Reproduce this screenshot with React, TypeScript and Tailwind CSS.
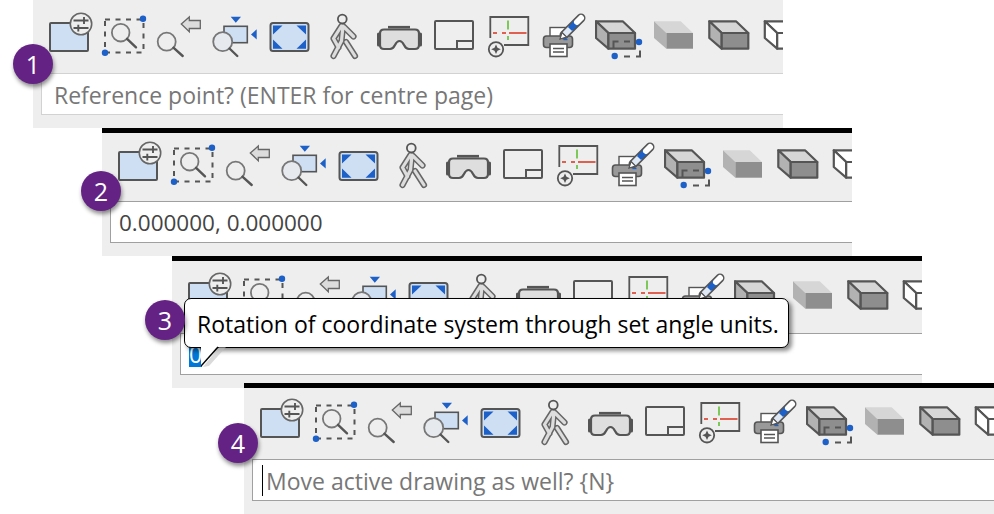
import React from "react";

const S = "#555555";
const BLUE = "#1c60c8";
const LIGHT = "#cfdff3";

function Ico({ x, w, children }: { x: number; w: number; children: React.ReactNode }) {
  return (
    <svg width={w} height={48} viewBox={`${x} 12 ${w} 48`} className="shrink-0 block">
      {children}
    </svg>
  );
}

function Mag({ cx, cy, r, ex, ey }: { cx: number; cy: number; r: number; ex: number; ey: number }) {
  const a = Math.atan2(ey - cy, ex - cx);
  return (
    <g fill="none" strokeLinecap="round">
      <circle cx={cx} cy={cy} r={r} stroke="#777" strokeWidth={1.8} />
      <line x1={cx + r * Math.cos(a)} y1={cy + r * Math.sin(a)} x2={ex} y2={ey} stroke={S} strokeWidth={2.4} />
    </g>
  );
}

function Box({ dx, top, side, front, stroke }: { dx: number; top: string; side: string; front: string; stroke: string }) {
  return (
    <g transform={`translate(${dx} 0)`} stroke={stroke} strokeWidth={stroke === "none" ? 0 : 2.2} strokeLinejoin="round">
      <polygon points="709.3,21.3 736,21.3 748.3,33 721.7,33" fill={top} />
      <polygon points="709.3,21.3 721.7,33 721.7,48.7 709.3,38" fill={side} />
      <rect x={721.7} y={33} width={26.6} height={15.7} fill={front} />
    </g>
  );
}

function Toolbar() {
  const walk = "M341.500 26L333.500 38.500L338.500 47.500M343 26L341.500 41L333.500 56M344 27L353.500 36.500M346 42L355 56";
  return (
    <div className="flex h-12 pl-3">
      <Ico x={45} w={55}>
        <rect x={50} y={23} width={38} height={28} fill={LIGHT} stroke={S} strokeWidth={2} rx={1} />
        <circle cx={81} cy={24} r={10.700} fill="#eeeeee" stroke="#666666" strokeWidth={1.6} />
        <path d="M73.500 20.500h15M73.500 28h15M84 17v7M78.300 24.800v6.700" stroke={S} strokeWidth={1.9} fill="none" />
      </Ico>
      <Ico x={100} w={55}>
        <rect x={105} y={19.500} width={38.500} height={33} fill="none" stroke={S} strokeWidth={2} strokeDasharray="5 5.500" />
        <Mag cx={120.700} cy={32.700} r={8.800} ex={136} ey={47.300} />
        <circle cx={143} cy={18.700} r={3.200} fill={BLUE} />
        <circle cx={105} cy={52.700} r={3.200} fill={BLUE} />
      </Ico>
      <Ico x={155} w={54}>
        <Mag cx={166.700} cy={41.700} r={9} ex={182.700} ey={56} />
        <polygon points="181.300,24 189.300,17 189.300,20.500 200.300,20.500 200.300,28.500 189.300,28.500 189.300,31.700" fill="#dcdcdc" stroke="#666" strokeWidth={1.3} />
      </Ico>
      <Ico x={209} w={56}>
        <rect x={224} y={26.300} width={23.300} height={16.400} fill={LIGHT} stroke={S} strokeWidth={1.600} />
        <polygon points="230.700,16.700 241,16.700 235.800,22.700" fill={BLUE} />
        <polygon points="256.700,29.300 256.700,39.500 251,34.400" fill={BLUE} />
        <circle cx={222.700} cy={41.700} r={9.500} fill="#e6e9ee" stroke="#777" strokeWidth={1.800} />
        <line x1={229.500} y1={48.500} x2={237.300} y2={56} stroke={S} strokeWidth={2.400} strokeLinecap="round" />
      </Ico>
      <Ico x={265} w={60}>
        <rect x={270.500} y={23} width={38} height={28} rx={2.500} fill={LIGHT} stroke={S} strokeWidth={2} />
        <polygon points="273,25.500 282.500,25.500 273,34.500" fill={BLUE} />
        <polygon points="306,25.500 296.500,25.500 306,34.500" fill={BLUE} />
        <polygon points="273,48.800 282.500,48.800 273,39.500" fill={BLUE} />
        <polygon points="306,48.800 296.500,48.800 306,39.500" fill={BLUE} />
      </Ico>
      <Ico x={325} w={48}>
        <g fill="none" strokeLinecap="round" strokeLinejoin="round">
          <path d={walk} stroke="#666666" strokeWidth={6.200} />
          <path d={walk} stroke="#dddddd" strokeWidth={3.200} />
        </g>
        <circle cx={342.300} cy={19} r={4.400} fill="#eeeeee" stroke={S} strokeWidth={1.800} />
      </Ico>
      <Ico x={373} w={57}>
        <path d="M388 27.200h22" stroke={S} strokeWidth={2.600} />
        <path d="M378.500 34v11M420.500 34v11" stroke={S} strokeWidth={3} strokeLinecap="round" />
        <path d="M384 29.500h31q4 0 4 4v11.500q0 4-4 4h-6q-3 0-5-4q-2-4-4.500-4q-2.500 0-4.500 4q-2 4-5 4h-6q-4 0-4-4v-11.500q0-4 4-4z" fill="#dedede" stroke={S} strokeWidth={2.200} />
      </Ico>
      <Ico x={430} w={55}>
        <rect x={435} y={21} width={38} height={28} rx={1} fill="none" stroke={S} strokeWidth={2} />
        <path d="M457 49v-8h16" fill="none" stroke={S} strokeWidth={2} />
      </Ico>
      <Ico x={485} w={55}>
        <path d="M490.300 38V17h38v28H504" fill="none" stroke={S} strokeWidth={1.800} />
        <path d="M493 33h4M502 33h4M509 33h17.500" stroke="#e0604f" strokeWidth={2} />
        <path d="M508 20.500v9M508 36v4" stroke="#7ec85a" strokeWidth={2} />
        <circle cx={496} cy={49.300} r={7.200} fill="#eeeeee" stroke={S} strokeWidth={1.800} />
        <path d="M496 44.500l1.500 3.300 3.300 1.500-3.300 1.500-1.500 3.300-1.500-3.300-3.300-1.500 3.300-1.500z" fill={S} />
      </Ico>
      <Ico x={540} w={55}>
        <rect x={550} y={27.500} width={17} height={10} fill="#ffffff" stroke={S} strokeWidth={1.400} />
        <rect x={543.500} y={36} width={29} height={11.500} rx={3} fill="#999999" stroke={S} strokeWidth={1.600} />
        <rect x={550} y={44} width={17} height={12.500} fill="#ffffff" stroke={S} strokeWidth={1.600} />
        <path d="M553 48.500h11M553 52h11" stroke={S} strokeWidth={1.400} />
        <path d="M564 35L581 18" stroke={S} strokeWidth={9} strokeLinecap="round" />
        <path d="M564.500 34.500L571 28" stroke="#dfe8f5" strokeWidth={6} />
        <path d="M570 29L577 22" stroke={BLUE} strokeWidth={6} />
        <path d="M577 22L581 18" stroke="#ffffff" strokeWidth={6} strokeLinecap="round" />
        <polygon points="560,39 562,32.500 566.500,37" fill="#ffffff" stroke={S} strokeWidth={1.200} />
        <path d="M563.500 39.500h4" stroke={BLUE} strokeWidth={1.400} />
      </Ico>
      <Ico x={595} w={55}>
        <Box dx={-113.300} top="#d6d6d6" side="#b2b2b2" front="#8e8e8e" stroke={S} />
        <path d="M613.500 48v-6.500h5M624 41.500h6M624 56.500h6M640 50.500V56.500h-4" fill="none" stroke={S} strokeWidth={2} />
        <circle cx={639} cy={42} r={3.200} fill={BLUE} />
        <circle cx={614.700} cy={56} r={3.200} fill={BLUE} />
      </Ico>
      <Ico x={650} w={55}>
        <Box dx={-55.300} top="#d6d6d6" side="#b2b2b2" front="#8e8e8e" stroke="none" />
      </Ico>
      <Ico x={705} w={55}>
        <Box dx={0} top="#d6d6d6" side="#b2b2b2" front="#8e8e8e" stroke={S} />
      </Ico>
      <Ico x={760} w={23}>
        <Box dx={55.500} top="#ffffff" side="#ffffff" front="#ffffff" stroke={S} />
      </Ico>
    </div>
  );
}

function Badge({ n, className }: { n: number; className: string }) {
  return (
    <div
      className={`absolute z-20 flex h-10 w-10 items-center justify-center rounded-full bg-[#642384] text-[25px] leading-none text-white shadow-[1px_3px_4px_rgba(0,0,0,0.45)] font-['Open_Sans',sans-serif] ${className}`}
    >
      {n}
    </div>
  );
}

export default function App() {
  return (
    <div className="flex h-[514px] w-[994px] flex-col overflow-hidden bg-white font-['Open_Sans',sans-serif]">
      {/* 1 */}
      <section className="relative ml-[33px] h-32 w-[750px] shrink-0 bg-[#eeeeee] pt-3">
        <Badge n={1} className="-left-5 top-[44px]" />
        <Toolbar />
        <div className="ml-2 mt-[13px] flex h-[42px] items-center border-y border-l border-[#d2d2d2] bg-white pl-3 pt-[2px] text-[23px] text-[#777777]">
          Reference point? (ENTER for centre page)
        </div>
      </section>
      {/* 2 */}
      <section className="relative ml-[102px] h-32 w-[750px] shrink-0 border-t-[5px] border-black bg-[#eeeeee] pt-2">
        <Badge n={2} className="-left-[21px] top-[38px]" />
        <Toolbar />
        <div className="ml-2 mt-[12px] flex h-[42px] items-center border-y border-l border-[#a0a0a0] bg-white pl-[8px] pt-[2px] text-[22.500px] text-[#444444]">
          0.000000, 0.000000
        </div>
      </section>
      {/* 3 */}
      <section className="relative ml-[172px] h-[132px] w-[750px] shrink-0 border-t-[5px] border-black bg-[#eeeeee] pt-[11px]">
        <Badge n={3} className="-left-[27px] top-[39px]" />
        <Toolbar />
        <div className="ml-2 mt-[13px] flex h-[42px] items-center border-y border-l border-[#a0a0a0] bg-white pl-2 text-[23px] text-[#444444]">
          <span className="bg-[#0078d7] leading-[26px] text-white">0</span>
        </div>
        <div className="absolute left-3 top-[37px] z-10 flex h-[50px] w-[605px] items-center rounded-[7px] border-[1.500px] border-black bg-white pl-3 pt-[2px] text-[23px] text-black shadow-[3px_3px_4px_rgba(0,0,0,0.45)]">
          Rotation of coordinate system through set angle units.
        </div>
        <svg width={34} height={26} viewBox="0 0 34 26" className="absolute left-[29px] top-[85px] z-10">
          <polygon points="18,1 25,1 8,20 2,21" fill="#bbbbbb" opacity={0.55} />
          <polygon points="0,0 0,20 17,1 17,0" fill="#ffffff" />
          <path d="M0 20L17 1" fill="none" stroke="#000000" strokeWidth={1.500} />
        </svg>
      </section>
      {/* 4 */}
      <section className="relative z-[1] ml-[244px] -mt-[5px] h-[131px] w-[750px] shrink-0 border-t-[5px] border-black bg-[#eeeeee] pt-[10px]">
        <Badge n={4} className="-left-[26px] top-[35px]" />
        <Toolbar />
        <div className="ml-2 mt-[13px] flex h-[42px] items-center border-y border-l border-[#a0a0a0] bg-white pl-[9px] text-[23px] text-[#777777]">
          <span className="mr-[3px] h-[31px] w-px bg-black" />
          <span className="pt-[2px]">Move active drawing as well? {"{N}"}</span>
        </div>
      </section>
    </div>
  );
}
